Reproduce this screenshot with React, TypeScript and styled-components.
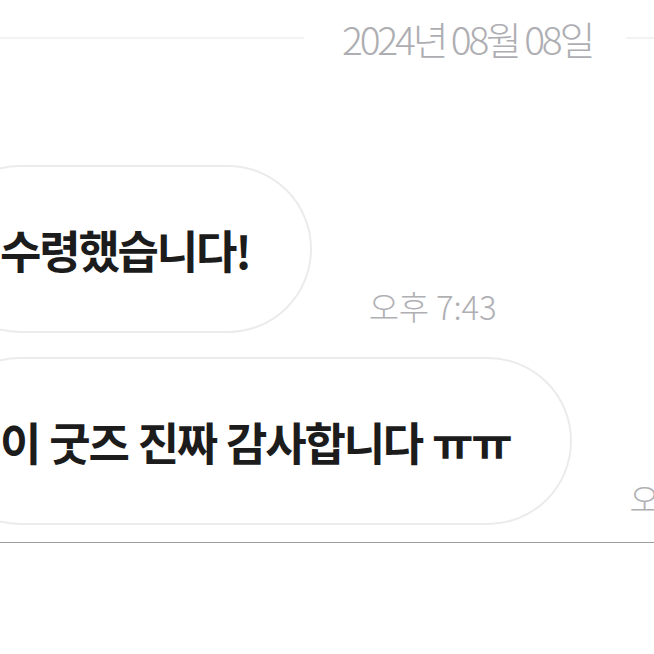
import React from "react";
import styled, { createGlobalStyle } from "styled-components";

const GlobalStyle = createGlobalStyle`
  html, body {
    margin: 0;
    padding: 0;
    background: #fff;
    overflow: hidden;
  }
  body {
    font-family: "Noto Sans CJK KR", "Noto Sans", sans-serif;
  }
`;

const Page = styled.div`
  width: 654px;
  height: 654px;
  overflow: hidden;
  display: flex;
  flex-direction: column;
  background: #fff;
`;

const DateDivider = styled.div`
  display: flex;
  align-items: center;
  height: 76px;
`;

const Line = styled.div<{ width?: number }>`
  height: 2px;
  background: #f3f3f3;
  flex: ${(p) => (p.width ? `0 0 ${p.width}px` : "1")};
`;

const DateText = styled.span`
  margin: 0 34px 0 38px;
  font-size: 39px;
  font-weight: 300;
  letter-spacing: -3.2px;
  color: #aeaeb2;
  white-space: nowrap;
  line-height: 1;
`;

const Messages = styled.div`
  display: flex;
  flex-direction: column;
  gap: 24px;
  padding-top: 89px;
`;

const Row = styled.div`
  display: flex;
  align-items: flex-end;
  gap: 57px;
  margin-left: -64px;
  white-space: nowrap;
`;

const Bubble = styled.div`
  flex-shrink: 0;
  display: flex;
  align-items: center;
  height: 164px;
  padding: 0 60px 0 62px;
  border: 2px solid #ebebeb;
  border-radius: 84px;
  background: #fff;
  font-size: 45px;
  font-weight: 700;
  letter-spacing: -2.2px;
  word-spacing: 2px;
  color: #1c1c1c;
`;

const Time = styled.span`
  flex-shrink: 0;
  margin-bottom: 10px;
  font-size: 33px;
  font-weight: 300;
  letter-spacing: -0.2px;
  color: #b0b0b4;
  line-height: 1;
`;

const BottomRule = styled.div`
  margin-top: 17px;
  height: 1px;
  background: #9c9c9c;
`;

const messages = [
  { text: "수령했습니다!", time: "오후 7:43" },
  { text: "이 굿즈 진짜 감사합니다 ㅠㅠ", time: "오후 7:43" },
];

export default function App() {
  return (
    <>
      <GlobalStyle />
      <Page>
        <DateDivider>
          <Line width={304} />
          <DateText>2024년 08월 08일</DateText>
          <Line />
        </DateDivider>
        <Messages>
          {messages.map((m, i) => (
            <Row key={i}>
              <Bubble>{m.text}</Bubble>
              <Time>{m.time}</Time>
            </Row>
          ))}
        </Messages>
        <BottomRule />
      </Page>
    </>
  );
}
